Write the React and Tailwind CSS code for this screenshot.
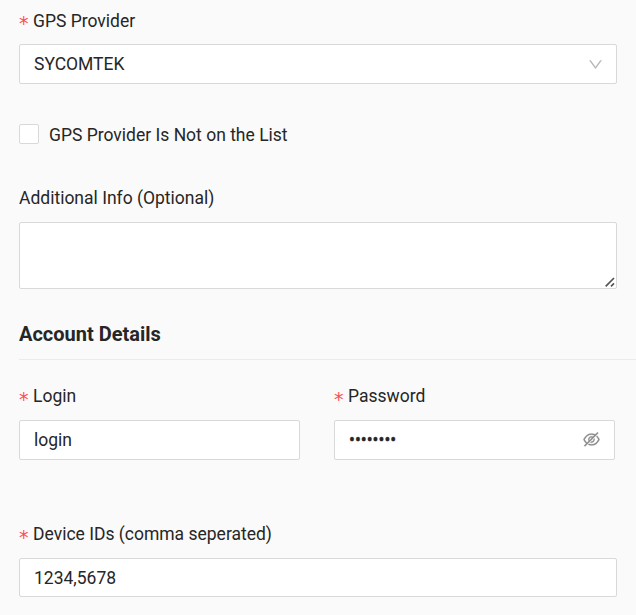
import { useState } from 'react'
import clsx from 'clsx'
import { AiOutlineDown, AiOutlineEye, AiOutlineEyeInvisible } from 'react-icons/ai'

const BOX = 'block w-full rounded-[2px] border border-[#d9d9d9] bg-white px-3.5 outline-none'

function Label({ htmlFor, required, className, children }) {
  return (
    <label htmlFor={htmlFor} className={clsx('flex h-10 items-center whitespace-nowrap', className)}>
      {required && (
        <span className="mt-[3px] w-3.5 font-['DejaVu_Sans'] text-[19px] leading-5 text-[#ff4d4f]">
          *
        </span>
      )}
      {children}
    </label>
  )
}

function PasswordInput({ id }) {
  const [value, setValue] = useState('password')
  const [visible, setVisible] = useState(false)
  const Icon = visible ? AiOutlineEye : AiOutlineEyeInvisible

  return (
    <div className={clsx(BOX, 'flex h-10 items-center')}>
      <input
        id={id}
        type={visible ? 'text' : 'password'}
        value={value}
        onChange={(e) => setValue(e.target.value)}
        className="min-w-0 flex-1 bg-transparent pt-0.5 outline-none [-webkit-text-stroke:0.4px_#262626]"
      />
      <button
        type="button"
        aria-label="Toggle password"
        onClick={() => setVisible(!visible)}
        className="-mr-px -mt-px"
      >
        <Icon className="size-[19px] stroke-[12] text-[#8c8c8c]" />
      </button>
    </div>
  )
}

export default function App() {
  return (
    <form className="h-[615px] overflow-hidden bg-[#fafafa] pl-[19px] font-[Roboto,sans-serif] text-[17.5px] leading-[27.5px] text-[#262626]">
      <div className="w-[598px]">
        <Label htmlFor="provider" required className="pt-[3px]">
          GPS Provider
        </Label>
        <button
          id="provider"
          type="button"
          className={clsx(BOX, 'mt-1 flex h-10 items-center justify-between')}
        >
          <span className="pt-0.5">SYCOMTEK</span>
          <AiOutlineDown className="-mr-[1.5px] size-[17px] text-[#b8b8b8]" />
        </button>

        <label className="mt-10 flex h-5 items-center gap-2.5">
          <input
            type="checkbox"
            className="size-5 appearance-none rounded-[2px] border border-[#d9d9d9] bg-white checked:bg-[#1890ff]"
          />
          <span className="pt-[3px]">GPS Provider Is Not on the List</span>
        </label>

        <div className="mt-[34px]">
          <Label htmlFor="info" className="pt-0.5">
            Additional Info (Optional)
          </Label>
          <div className="relative mt-1">
            <textarea
              id="info"
              className={clsx(BOX, 'h-[67px] resize-y py-1.5 [&::-webkit-resizer]:bg-transparent')}
            />
            <svg
              viewBox="0 0 10 10"
              className="pointer-events-none absolute bottom-[2px] right-[2px] size-2.5"
              fill="none"
              stroke="#555"
              strokeWidth="1.7"
              aria-hidden
            >
              <path d="M.7 9.3 9 1M6 9.3 9 6.3" />
            </svg>
          </div>
        </div>
      </div>

      <h2 className="mt-[29px] border-b border-[#ebebeb] pb-[9px] pt-px text-[20px] font-bold leading-[31px]">
        Account Details
      </h2>

      <div className="mt-4 flex gap-[34px]">
        <div className="w-[281px]">
          <Label htmlFor="login" required className="pt-0.5">
            Login
          </Label>
          <input id="login" defaultValue="login" className={clsx(BOX, 'mt-1 h-10')} />
        </div>
        <div className="w-[281px]">
          <Label htmlFor="password" required className="pt-0.5">
            Password
          </Label>
          <div className="mt-1">
            <PasswordInput id="password" />
          </div>
        </div>
      </div>

      <div className="mt-[54px] w-[598px]">
        <Label htmlFor="devices" required className="pt-0.5">
          Device IDs (comma seperated)
        </Label>
        <input id="devices" defaultValue="1234,5678" className={clsx(BOX, 'mt-1 h-[39px]')} />
      </div>
    </form>
  )
}
